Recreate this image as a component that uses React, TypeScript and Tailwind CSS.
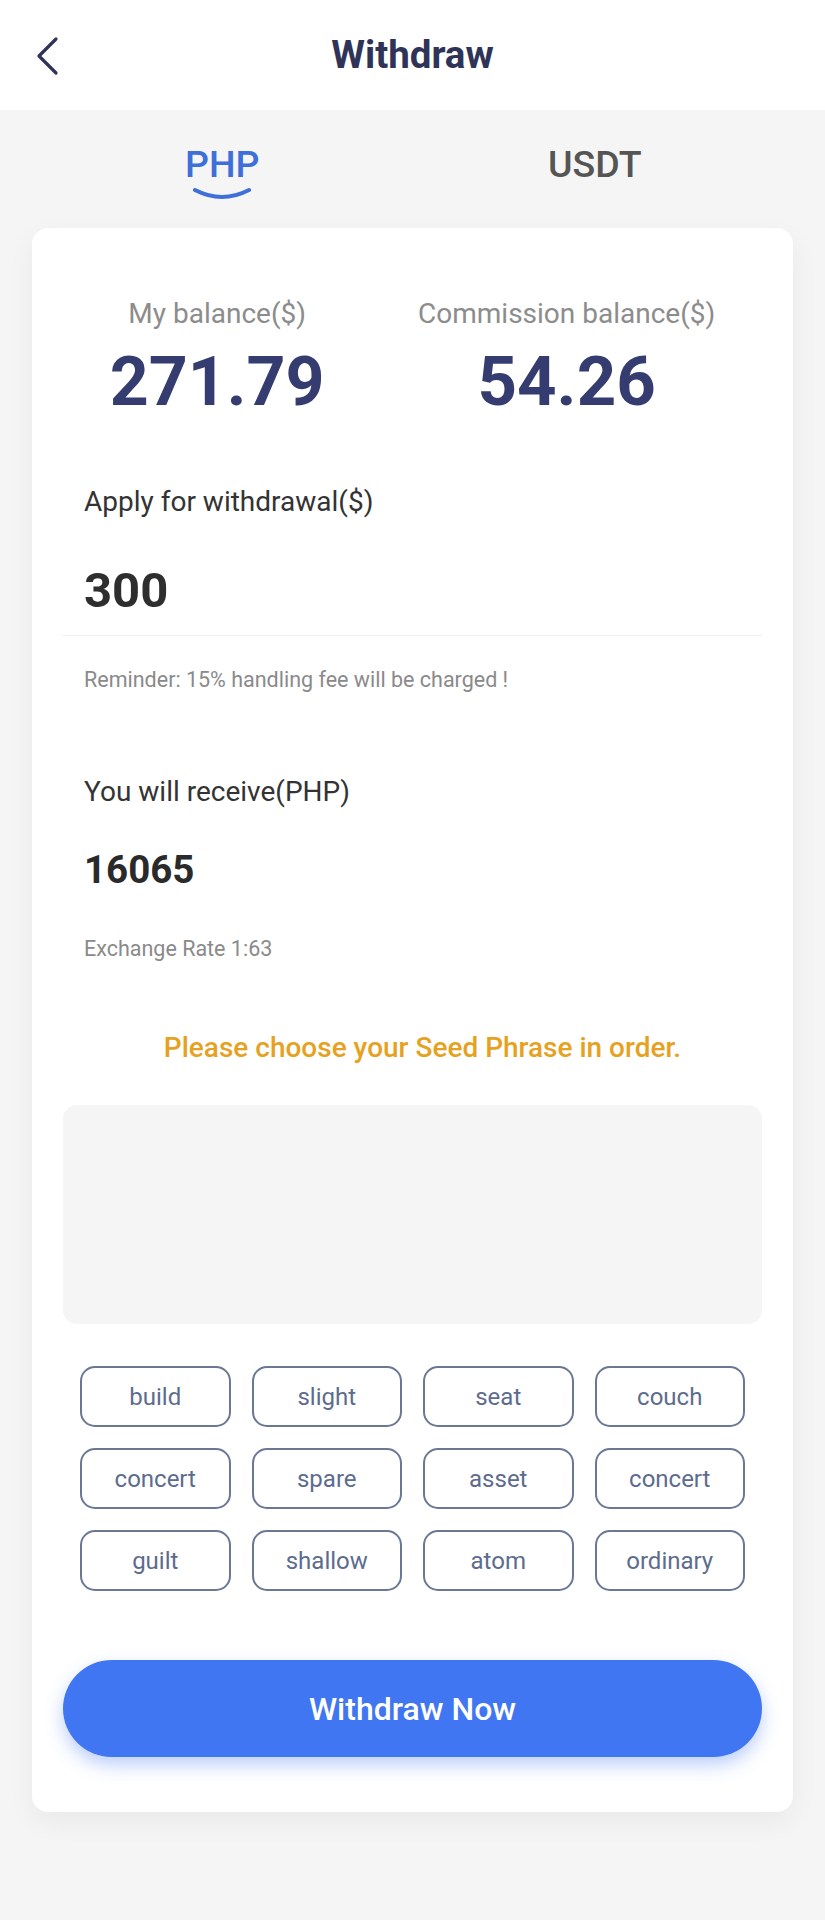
import React from "react";

const words = [
  "build", "slight", "seat", "couch",
  "concert", "spare", "asset", "concert",
  "guilt", "shallow", "atom", "ordinary",
];

export default function App() {
  return (
    <div className="min-h-[1920px] w-full bg-[#f5f5f5] font-['Roboto',sans-serif]">
      {/* Header */}
      <div className="relative flex h-[110px] items-center justify-center bg-white">
        <div className="absolute left-[34px] top-[36px]">
          <svg width="28" height="40" viewBox="0 0 28 40">
            <polyline points="22,3 5,20 22,37" fill="none" stroke="#2f3358" strokeWidth="3.2" strokeLinecap="round" strokeLinejoin="round" />
          </svg>
        </div>
        <h1 className="text-[38.5px] font-bold leading-[44px] text-[#2f3358]">Withdraw</h1>
      </div>

      {/* Tabs */}
      <div className="grid h-[118px] grid-cols-2 px-[32px] pt-[34px]">
        <div className="flex flex-col items-center">
          <span className="text-[37.5px] font-medium leading-[40px] text-[#3f6fd8]">PHP</span>
          <svg width="62" height="16" viewBox="0 0 62 16" className="mt-[2px]">
            <path d="M4 4 Q31 18 58 4" fill="none" stroke="#3f6fd8" strokeWidth="4" strokeLinecap="round" />
          </svg>
        </div>
        <div className="flex flex-col items-center pr-[16px]">
          <span className="text-[37.5px] font-medium leading-[40px] text-[#555555]">USDT</span>
        </div>
      </div>

      {/* Card */}
      <div className="mx-[32px] rounded-[16px] bg-white px-[31px] pb-[55px] pt-[70px] shadow-[0_10px_28px_rgba(0,0,0,0.05)]">
        {/* balances */}
        <div className="flex justify-around">
          <div className="flex flex-col items-center">
            <div className="h-[32px] text-[28px] leading-[32px] text-[#8c8c8c]">My balance($)</div>
            <div className="mt-[16px] h-[72px] text-[68px] font-bold leading-[72px] text-[#343c70]">271.79</div>
          </div>
          <div className="flex flex-col items-center">
            <div className="h-[32px] text-[28px] leading-[32px] text-[#8c8c8c]">Commission balance($)</div>
            <div className="mt-[16px] h-[72px] text-[69px] font-bold leading-[72px] text-[#343c70]">54.26</div>
          </div>
        </div>

        {/* apply */}
        <div className="mt-[68px] px-[21px] text-[28px] leading-[32px] text-[#333333]">Apply for withdrawal($)</div>
        <div className="mt-[45px] border-b border-[#eeeeee] px-[21px] pb-[16px]">
          <div className="h-[56px] text-[49px] font-bold leading-[56px] text-[#2e2e2e]">300</div>
        </div>

        <div className="mt-[30px] px-[21px] text-[21.5px] leading-[28px] text-[#8a8a8a]">Reminder: 15% handling fee will be charged !</div>

        <div className="mt-[82px] px-[21px] text-[28px] leading-[32px] text-[#333333]">You will receive(PHP)</div>
        <div className="mt-[40px] px-[21px] text-[38.5px] font-bold leading-[44px] text-[#2a2a2a]">16065</div>
        <div className="mt-[43px] px-[21px] text-[21.5px] leading-[28px] text-[#8a8a8a]">Exchange Rate 1:63</div>

        <div className="mt-[69px] pl-[20px] text-center text-[28px] font-medium leading-[32px] text-[#e6a21f]">Please choose your Seed Phrase in order.</div>

        <div className="mt-[41px] h-[219px] rounded-[14px] bg-[#f5f5f5]" />

        <div className="mx-[17px] mt-[42px] grid grid-cols-4 gap-x-[21px] gap-y-[21px]">
          {words.map((w, i) => (
            <div
              key={i}
              className="flex h-[61px] items-center justify-center rounded-[15px] border-2 border-[#6a7896] text-[24px] leading-[28px] text-[#5d6c8e]"
            >
              {w}
            </div>
          ))}
        </div>

        <button className="mt-[69px] flex h-[97px] w-full items-center justify-center rounded-full bg-[#4076f1] text-[32px] font-medium text-white shadow-[0_8px_18px_rgba(64,118,241,0.35)]">
          Withdraw Now
        </button>
      </div>
    </div>
  );
}
